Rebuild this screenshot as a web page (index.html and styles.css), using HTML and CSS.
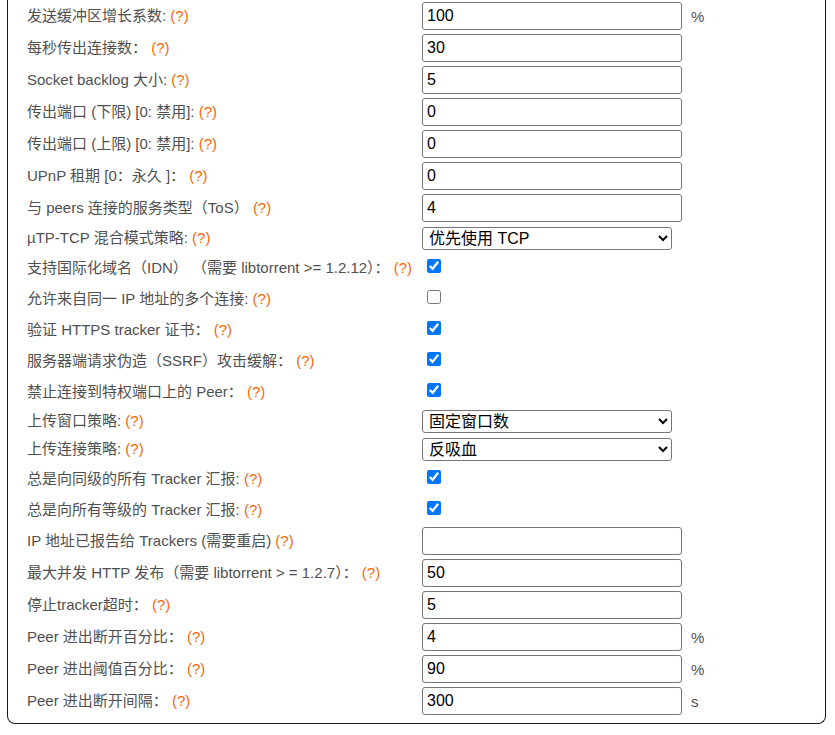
FILE: index.html
```html
<!DOCTYPE html>
<html lang="zh-CN">
<head>
<meta charset="utf-8">
<link rel="stylesheet" href="styles.css">
</head>
<body>
<div class="panel">
  <div class="row r-input"><span class="lbl">发送缓冲区增长系数: <span class="help">(?)</span></span><input class="txt" value="100"><span class="unit">%</span></div>
  <div class="row r-input"><span class="lbl">每秒传出连接数：&nbsp;<span class="help">(?)</span></span><input class="txt" value="30"><span class="unit"></span></div>
  <div class="row r-input"><span class="lbl">Socket backlog 大小: <span class="help">(?)</span></span><input class="txt" value="5"><span class="unit"></span></div>
  <div class="row r-input"><span class="lbl">传出端口 (下限) [0: 禁用]: <span class="help">(?)</span></span><input class="txt" value="0"><span class="unit"></span></div>
  <div class="row r-input"><span class="lbl">传出端口 (上限) [0: 禁用]: <span class="help">(?)</span></span><input class="txt" value="0"><span class="unit"></span></div>
  <div class="row r-input"><span class="lbl">UPnP 租期 [0：永久 ]：&nbsp;<span class="help">(?)</span></span><input class="txt" value="0"><span class="unit"></span></div>
  <div class="row r-input"><span class="lbl">与 peers 连接的服务类型（ToS）&nbsp;<span class="help">(?)</span></span><input class="txt" value="4"><span class="unit"></span></div>
  <div class="row r-select"><span class="lbl">µTP-TCP 混合模式策略: <span class="help">(?)</span></span><select class="sel"><option>优先使用 TCP</option></select><span class="unit"></span></div>
  <div class="row r-check"><span class="lbl">支持国际化域名（IDN）&nbsp;（需要 libtorrent &gt;= 1.2.12）：&nbsp;<span class="help">(?)</span></span><span class="cbwrap"><input type="checkbox" class="cb" checked></span><span class="unit"></span></div>
  <div class="row r-check"><span class="lbl">允许来自同一 IP 地址的多个连接: <span class="help">(?)</span></span><span class="cbwrap"><input type="checkbox" class="cb"></span><span class="unit"></span></div>
  <div class="row r-check"><span class="lbl">验证 HTTPS tracker 证书：&nbsp;<span class="help">(?)</span></span><span class="cbwrap"><input type="checkbox" class="cb" checked></span><span class="unit"></span></div>
  <div class="row r-check"><span class="lbl">服务器端请求伪造（SSRF）攻击缓解：&nbsp;<span class="help">(?)</span></span><span class="cbwrap"><input type="checkbox" class="cb" checked></span><span class="unit"></span></div>
  <div class="row r-check"><span class="lbl">禁止连接到特权端口上的 Peer：&nbsp;<span class="help">(?)</span></span><span class="cbwrap"><input type="checkbox" class="cb" checked></span><span class="unit"></span></div>
  <div class="row r-select"><span class="lbl">上传窗口策略: <span class="help">(?)</span></span><select class="sel"><option>固定窗口数</option></select><span class="unit"></span></div>
  <div class="row r-select"><span class="lbl">上传连接策略: <span class="help">(?)</span></span><select class="sel"><option>反吸血</option></select><span class="unit"></span></div>
  <div class="row r-check"><span class="lbl">总是向同级的所有 Tracker 汇报: <span class="help">(?)</span></span><span class="cbwrap"><input type="checkbox" class="cb" checked></span><span class="unit"></span></div>
  <div class="row r-check"><span class="lbl">总是向所有等级的 Tracker 汇报: <span class="help">(?)</span></span><span class="cbwrap"><input type="checkbox" class="cb" checked></span><span class="unit"></span></div>
  <div class="row r-input"><span class="lbl">IP 地址已报告给 Trackers (需要重启) <span class="help">(?)</span></span><input class="txt" value=""><span class="unit"></span></div>
  <div class="row r-input"><span class="lbl">最大并发 HTTP 发布（需要 libtorrent &gt; = 1.2.7）：&nbsp;<span class="help">(?)</span></span><input class="txt" value="50"><span class="unit"></span></div>
  <div class="row r-input"><span class="lbl">停止tracker超时：&nbsp;<span class="help">(?)</span></span><input class="txt" value="5"><span class="unit"></span></div>
  <div class="row r-input"><span class="lbl">Peer 进出断开百分比：&nbsp;<span class="help">(?)</span></span><input class="txt" value="4"><span class="unit">%</span></div>
  <div class="row r-input"><span class="lbl">Peer 进出阈值百分比：&nbsp;<span class="help">(?)</span></span><input class="txt" value="90"><span class="unit">%</span></div>
  <div class="row r-input"><span class="lbl">Peer 进出断开间隔：&nbsp;<span class="help">(?)</span></span><input class="txt" value="300"><span class="unit">s</span></div>
</div>
</body>
</html>
```

FILE: styles.css
```css
html, body {
  margin: 0;
  padding: 0;
  background: #fff;
}

body {
  font-family: "Liberation Sans", "Noto Sans CJK SC", sans-serif;
  font-size: 15px;
  color: #505050;
}

.panel {
  margin-left: 7px;
  width: 798px;
  border: 1px solid #1a1a1a;
  border-top: none;
  border-radius: 0 0 8px 8px;
  padding: 0 0 6px 19px;
  box-sizing: content-box;
  display: flex;
  flex-direction: column;
}

.row {
  display: grid;
  grid-template-columns: 395px 260px auto;
  align-items: center;
}

.r-input { height: 32px; }
.r-select { height: 28px; }
.r-check { height: 31px; }

.lbl {
  white-space: nowrap;
  line-height: 18px;
}

.help {
  color: hsl(24, 95%, 50%);
}

.txt {
  box-sizing: border-box;
  width: 260px;
  height: 28px;
  margin: 0;
  padding: 0 4px;
  border: 1px solid #767676;
  border-radius: 3px;
  font-family: "Liberation Sans", "Noto Sans CJK SC", sans-serif;
  font-size: 16px;
  color: #000;
  background: #fff;
}

.sel {
  box-sizing: border-box;
  width: 250px;
  height: 23px;
  margin: 0;
  padding: 0 2px;
  border: 1px solid #767676;
  border-radius: 3px;
  font-family: "Liberation Sans", "Noto Sans CJK SC", sans-serif;
  font-size: 16px;
  color: #000;
  background: #fff;
}

.cbwrap {
  display: flex;
  align-items: center;
}

.cb {
  width: 14px;
  height: 14px;
  margin: 0 0 3px 5px;
}

.unit {
  margin-left: 9px;
  font-size: 15px;
}
```
